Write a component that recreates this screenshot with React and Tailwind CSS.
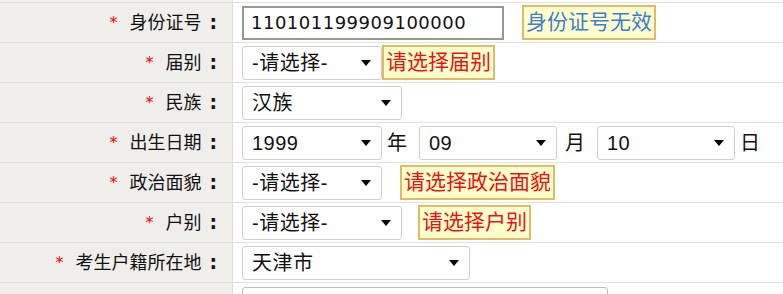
import React from "react";

const FONT = { fontFamily: '"DejaVu Sans", "Noto Sans CJK SC", sans-serif' };
const SEL_FONT = { fontFamily: '"Liberation Sans", "Noto Sans CJK SC", sans-serif' };

function Arrow() {
  return (
    <svg width="10" height="6" viewBox="0 0 10 6" className="shrink-0">
      <path d="M0 0 H10 L5 6 Z" fill="#000" />
    </svg>
  );
}

function Select({ value, width }) {
  return (
    <div
      className={`flex items-center justify-between h-[34px] bg-white border border-[#cfcfcf] rounded-[3px] pl-[9px] pr-[10px] text-[20px] text-[#111] ${width}`}
      style={SEL_FONT}
    >
      <span className="tracking-[0.5px]">{value}</span>
      <Arrow />
    </div>
  );
}

function Tip({ text, blue }) {
  return (
    <div
      className={`h-[35px] flex items-center px-[2px] bg-[#ffffcc] border-2 border-[#e1b967] text-[21px] leading-none ${
        blue ? "text-[#3b7fd0]" : "text-[#f01010]"
      }`}
    >
      {text}
    </div>
  );
}

function Row({ label, children }) {
  return (
    <div className="flex h-[40px] border-b border-[#e4e2de]">
      <div className="w-[233px] shrink-0 bg-[#efeeeb] border-r border-[#e0ded9] flex items-center justify-end pr-[15px] text-[18px] text-[#111]">
        <span className="text-[#ff0000] text-[16px] mr-[12px]">*</span>
        <span>{label}</span>
        <span className="ml-[8px] text-[19px] font-bold">:</span>
      </div>
      <div className="flex-1 flex items-center pl-[9px] bg-white">{children}</div>
    </div>
  );
}

export default function App() {
  return (
    <div className="w-[783px] h-[294px] overflow-hidden bg-white" style={FONT}>
      <div className="flex h-[3px] border-b border-[#e4e2de]">
        <div className="w-[233px] bg-[#efeeeb] border-r border-[#e0ded9]"></div>
      </div>

      <Row label="身份证号">
        <div className="h-[34px] w-[262px] border-2 border-[#9b9690] bg-white flex items-center pl-[7px] text-[18px] tracking-[0.5px] text-[#111]">
          110101199909100000
        </div>
        <div className="ml-[18px]">
          <Tip text="身份证号无效" blue />
        </div>
      </Row>

      <Row label="届别">
        <Select value="-请选择-" width="w-[140px]" />
        <Tip text="请选择届别" />
      </Row>

      <Row label="民族">
        <Select value="汉族" width="w-[160px]" />
      </Row>

      <Row label="出生日期">
        <Select value="1999" width="w-[140px]" />
        <span className="ml-[5px] mr-[12px] text-[20px] text-[#111]">年</span>
        <Select value="09" width="w-[138px]" />
        <span className="ml-[8px] mr-[12px] text-[20px] text-[#111]">月</span>
        <Select value="10" width="w-[138px]" />
        <span className="ml-[5px] text-[20px] text-[#111]">日</span>
      </Row>

      <Row label="政治面貌">
        <Select value="-请选择-" width="w-[140px]" />
        <div className="ml-[18px]">
          <Tip text="请选择政治面貌" />
        </div>
      </Row>

      <Row label="户别">
        <Select value="-请选择-" width="w-[160px]" />
        <div className="ml-[16px]">
          <Tip text="请选择户别" />
        </div>
      </Row>

      <Row label="考生户籍所在地">
        <Select value="天津市" width="w-[228px]" />
      </Row>

      <div className="flex h-[40px]">
        <div className="w-[233px] shrink-0 bg-[#efeeeb] border-r border-[#e0ded9]"></div>
        <div className="flex-1 pl-[9px] pt-[4px]">
          <div className="h-[34px] w-[366px] border border-[#bdbdbd] rounded-[3px]"></div>
        </div>
      </div>
    </div>
  );
}
